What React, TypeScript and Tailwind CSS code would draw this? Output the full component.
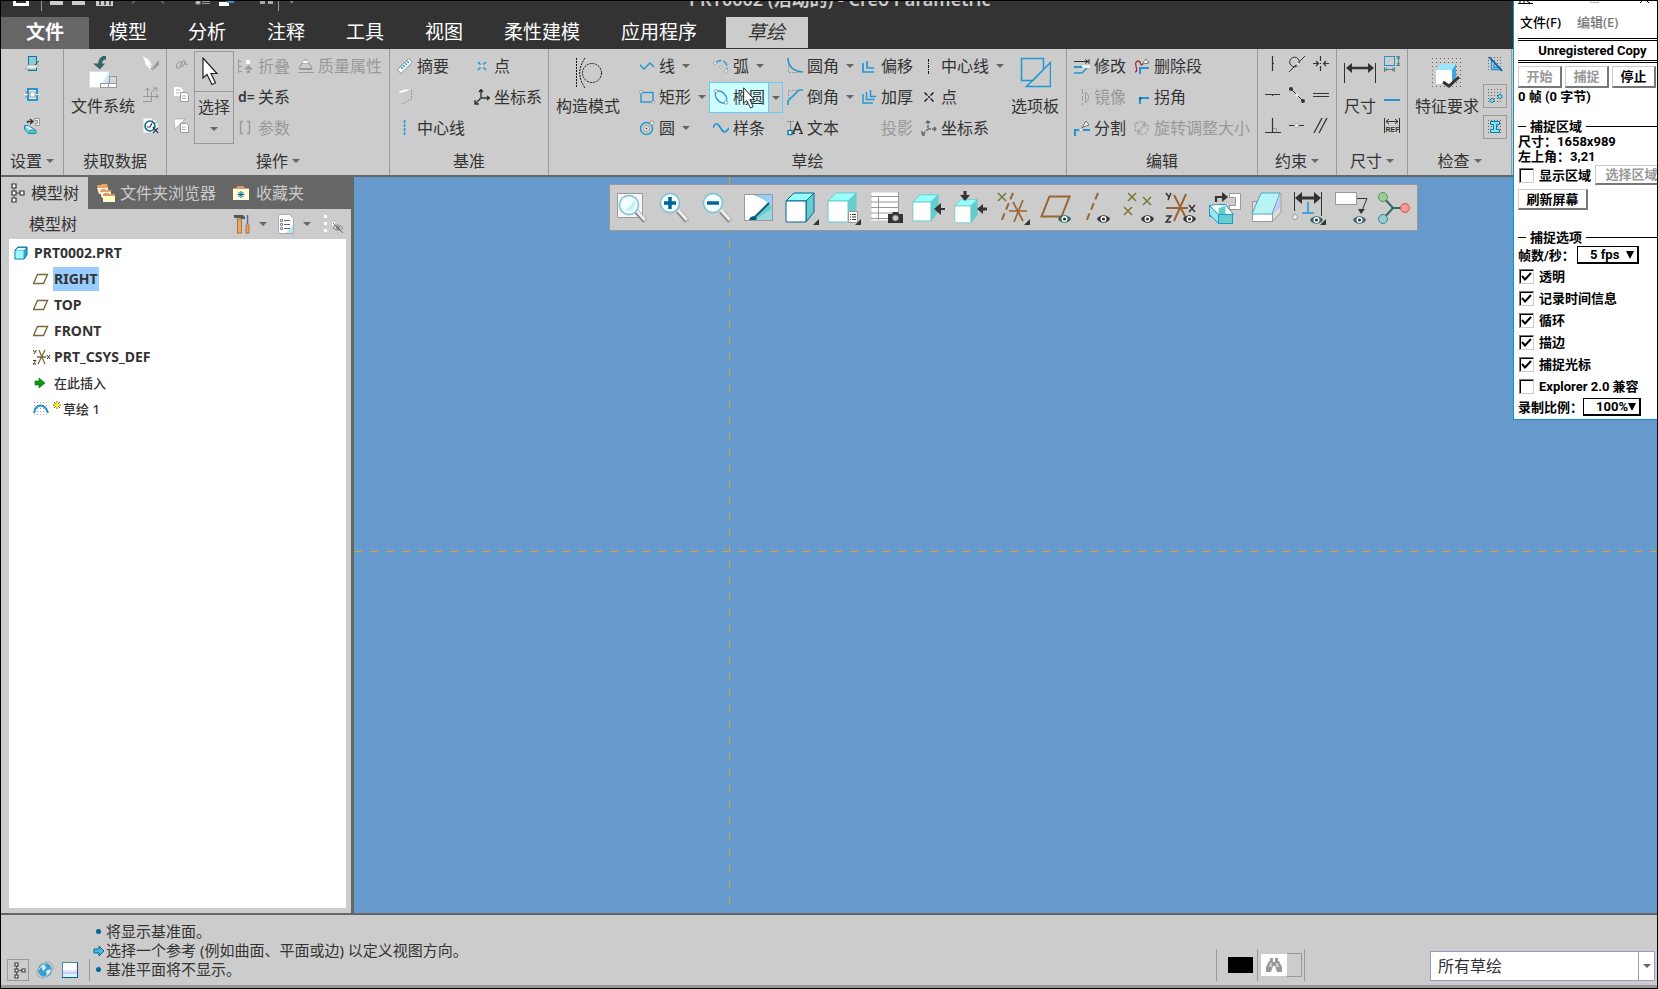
import React from 'react';

const UI = 'font-["Noto_Sans","Noto_Sans_CJK_SC",sans-serif]';
const B = '#2196d3';
const D = '#333333';
const G = '#999999';

type IconProps = { w?: number; h?: number; children?: React.ReactNode };
const Icon = ({ w = 16, h = 16, children }: IconProps) => (
  <svg width={w} height={h} viewBox={`0 0 ${w} ${h}`} fill="none" className="shrink-0" aria-hidden="true">
    {children}
  </svg>
);

const Caret = ({ color = '#666666' }: { color?: string }) => (
  <svg width="8" height="4" viewBox="0 0 8 4" className="shrink-0" aria-hidden="true">
    <path d="M0 0h8L4 4z" fill={color} />
  </svg>
);

const Empty = () => <Icon />;

/* ---------- ribbon icons ---------- */
const ViewSetup = () => (
  <Icon>
    <rect x="4.500" y=".5" width="8" height="14" fill="#8fccd0" stroke="#0a7aa5" />
    <path d="M4 9h11l-4 4H1z" fill="#eee" stroke={G} strokeWidth=".7" />
    <path d="M11 9l4-4" stroke={D} strokeWidth=".8" />
  </Icon>
);
const SectionSetup = () => (
  <Icon>
    <rect x="4" y="2" width="9" height="11" fill="#eee" stroke={B} strokeWidth="2" />
    <rect x="6" y="5" width="5" height="5" fill="#fff" stroke="#888" strokeWidth=".8" />
    <path d="M0 7.500h4M12 7.500h4" stroke="#fff" strokeDasharray="2 1" />
    <path d="M1 4l2 2M1 11l2-2" stroke="#777" strokeWidth=".8" />
  </Icon>
);
const RegenSetup = () => (
  <Icon>
    <path d="M3.500 5V3.500H8M6 1l3 2.500L6 6" stroke={D} strokeWidth="1.300" />
    <path d="M10.500.500h5v7h-4v-2h2v-3h-3z" fill="#eee" stroke={G} />
    <path d="M.5 7.500h4l6 4v4h-6l-4-4z" fill="#d8f8fb" stroke="#1683b0" />
    <path d="M1 8l4 4v3.500L1 11.500z" fill="#66c6d6" />
    <path d="M6 12h6v3.500H5z" fill="#59bfc8" stroke="#1683b0" strokeWidth=".7" />
  </Icon>
);
const FileSystem = () => (
  <Icon w={28} h={34}>
    <path d="M17 1.500c-4 0-6 3-6 7" stroke="#336666" strokeWidth="4" />
    <path d="M4 7.500l7 6 5-6z" fill="#336666" />
    <rect x=".5" y="15.500" width="19" height="16" fill="#fff" stroke="#ddd" />
    <path d="M13 28l7-13v13z" fill="#c4eef5" />
    <path d="M18 28l2-8v8z" fill="#ccccff" />
    <rect x="20.500" y="20.500" width="7" height="8" fill="#d4d4dc" stroke={G} />
    <rect x="11.500" y="27.500" width="16" height="4" fill="#fff" stroke={G} />
    <path d="M19.500 28v4" stroke={G} />
  </Icon>
);
const Shrinkwrap = () => (
  <Icon>
    <path d="M0 0l6 4 4 8-2 2-5-5z" fill="#fff" />
    <path d="M7 13l4-3 5-6v5l-6 5z" fill={G} />
    <path d="M7 9l3 4" stroke="#bbb" />
  </Icon>
);
const Transfer = () => (
  <Icon>
    <path d="M0 9.500h15M4.500 1v8M2 3.500L4.500 1 7 3.500M8.500 9V5l5-4M10 1h4v4M12.500 7l3 2.500-3 2.500M8.500 10v4.500H0" stroke={G} />
  </Icon>
);
const Inspect = () => (
  <Icon>
    <path d="M.5.500h9l5 4v10H.5z" fill="#fff" />
    <path d="M9.500.500v4h5" stroke={G} strokeWidth=".7" />
    <circle cx="7" cy="8" r="5" stroke="#0b6a8e" strokeWidth="1.600" />
    <path d="M4 9h3l2-4M10 9l5 6M15 10l-5 5" stroke="#236" strokeWidth="1.200" />
  </Icon>
);
const Link = () => (
  <Icon>
    <ellipse cx="5" cy="9" rx="2" ry="3.500" stroke={G} transform="rotate(30 5 9)" />
    <ellipse cx="9" cy="7.500" rx="1.500" ry="3" stroke={G} transform="rotate(30 9 7.500)" />
    <path d="M10 6.500h2v2h2" stroke={G} />
  </Icon>
);
const Copy = () => (
  <Icon>
    <path d="M0 0h6l3 3v6H0z" fill="#fff" />
    <path d="M6.500 5.500h6l2 2v7h-8z" fill="#fff" stroke={G} />
    <path d="M2 3h4M2 6h3M8 9h4M8 11.500h4" stroke={G} strokeWidth=".8" />
  </Icon>
);
const Paste = () => (
  <Icon>
    <path d="M0 1h11L1 11z" fill="#fff" stroke={G} strokeWidth=".6" />
    <path d="M6.500 5.500h6l2 2v7h-8z" fill="#fff" stroke={G} />
    <path d="M8 9h4M8 11.500h4" stroke={G} strokeWidth=".8" />
  </Icon>
);
const Pointer = ({ w = 18, h = 30 }: { w?: number; h?: number }) => (
  <svg width={w} height={h} viewBox="0 0 18 30" aria-hidden="true" className="shrink-0">
    <path d="M2 1v20l4-3.500 5 10 3.500-1.800L10 16.500h6z" fill="#fff" stroke="#222" strokeWidth="1.200" />
  </svg>
);
const Collapse = () => (
  <Icon>
    <path d="M.5 1v14M1 3.500h3M1 8.500h3M1 13.500h3" stroke={G} />
    <rect x="8" y="2" width="4" height="4" fill="#fff" />
    <path d="M6 11.500h9L10.500 7zM9 12.500h3v2.500h-3z" fill={G} />
  </Icon>
);
const Mass = () => (
  <Icon>
    <path d="M5 5c0-5 5-5 5 0M4 5h7l3 5.500H1z" stroke={G} />
    <path d="M5 4h5" stroke="#fff" strokeWidth="2" />
    <path d="M2 11.500h12M0 14.500h16" stroke={G} />
  </Icon>
);
const Params = () => (
  <Icon>
    <path d="M5 1.500H2.500v12H5M9 1.500h2.500v12H9" stroke={G} strokeWidth="1.400" />
  </Icon>
);
const Ruler = () => (
  <Icon>
    <path d="M.5 11.500L11.500.500l4 3.500L4 15.500z" fill="#fff" stroke="#777" strokeWidth=".8" />
    <path d="M4 9l2 2M6 7l2 2M8 5l2 2M10 3l2 2" stroke={B} strokeWidth="1.300" />
  </Icon>
);
const PointBlue = () => (
  <Icon>
    <path d="M4 4l2.500 2.500M12 4L9.500 6.500M4 12l2.500-2.500M12 12L9.500 9.500" stroke={B} strokeWidth="1.500" />
    <circle cx="8" cy="8" r="1.500" fill="#eee" stroke={G} strokeWidth=".5" />
  </Icon>
);
const PlaneGrey = () => (
  <Icon>
    <path d="M14.500 1v9L5 15" stroke={G} strokeDasharray="2 1" />
    <path d="M2 2l6-2h6l-3 2-9 3z" fill="#fff" stroke="#bbb" strokeWidth=".6" />
  </Icon>
);
const Csys = ({ color = D, light = false }: { color?: string; light?: boolean }) => (
  <Icon>
    <path d="M7 1v8h8M7 9l-6 6M5 3l2-2.500L9 3M13 7l2.500 2L13 11M1 11v4h4" stroke={color} strokeWidth="1.400" strokeDasharray={light ? '3 1' : undefined} />
  </Icon>
);
const CenterBlue = () => (
  <Icon>
    <path d="M7.500 0v16" stroke={B} strokeWidth="1.600" strokeDasharray="3 1" />
  </Icon>
);
const Construction = () => (
  <Icon w={28} h={30}>
    <path d="M2.500 0v30M11 0C4 10 4 20 11 30" stroke="#111" strokeDasharray="2 1" />
    <circle cx="18" cy="15" r="9.500" stroke="#111" strokeDasharray="2 1" />
  </Icon>
);
const Line = () => (
  <Icon>
    <path d="M1 7l4 4 6-6 4 4" stroke={B} strokeWidth="1.500" />
  </Icon>
);
const Rect = () => (
  <Icon>
    <rect x="2" y="3.500" width="12" height="9.500" stroke={B} strokeWidth="1.400" />
    <circle cx="2" cy="3" r="1.500" fill="#eee" stroke="#777" strokeWidth=".5" />
    <circle cx="14" cy="13.500" r="1.500" fill="#eee" stroke="#777" strokeWidth=".5" />
  </Icon>
);
const Circle = () => (
  <Icon>
    <circle cx="7.500" cy="8.500" r="6" stroke={B} strokeWidth="1.500" />
    <circle cx="7.500" cy="8.500" r="3" fill="#eee" stroke={G} />
    <circle cx="7.500" cy="8.500" r="1" fill="#555" />
    <circle cx="13" cy="3" r="2" fill="#eee" stroke={G} />
  </Icon>
);
const Arc = () => (
  <Icon>
    <path d="M3 5c3-4 10-3 11 3v3" stroke={B} strokeWidth="1.500" strokeDasharray="6 2" />
    <circle cx="2" cy="5" r="1.500" fill="#eee" stroke={G} strokeWidth=".6" />
    <circle cx="13" cy="13" r="1.500" fill="#eee" stroke={G} strokeWidth=".6" />
    <circle cx="8" cy="9" r="1.300" fill="#eee" stroke={G} strokeWidth=".6" />
  </Icon>
);
const Ellipse = () => (
  <Icon>
    <ellipse cx="8" cy="8" rx="7" ry="4.500" stroke={B} strokeWidth="1.300" transform="rotate(48 8 8)" />
    <circle cx="3" cy="2" r="1.800" fill="#eee" stroke={G} strokeWidth=".8" />
    <circle cx="13" cy="13.500" r="1.800" fill="#eee" stroke={G} strokeWidth=".8" />
  </Icon>
);
const Spline = () => (
  <Icon>
    <path d="M0 8c2-6 5-5 7-1s5 8 9 1" stroke={B} strokeWidth="1.700" />
  </Icon>
);
const Fillet = () => (
  <Icon>
    <path d="M1 0c0 7 4 13 15 14" stroke={B} strokeWidth="1.600" />
    <path d="M1.500 6v8.500H12" stroke={G} strokeDasharray="2 1" />
  </Icon>
);
const Chamfer = () => (
  <Icon>
    <path d="M1 16v-4L12 1h4" stroke={B} strokeWidth="1.600" />
    <path d="M1.500 10V1.500H11" stroke={G} strokeDasharray="2 1" />
  </Icon>
);
const TextIcon = () => (
  <Icon>
    <path d="M0 1.500h7M3.500 2v9" stroke="#888" />
    <path d="M6 13.500l4.500-11 4.500 11M8 9.500h5" stroke={D} strokeWidth="1.600" />
    <path d="M5 13.500h3M12 13.500h4" stroke={D} />
    <rect x="1" y="10.500" width="4" height="4" fill="#fff" stroke="#0a7aa5" strokeWidth="1.400" />
  </Icon>
);
const Offset = () => (
  <Icon>
    <path d="M2 5v9h11M6 3v7h7" stroke={B} strokeWidth="1.700" />
  </Icon>
);
const Thicken = () => (
  <Icon>
    <path d="M2 5v9h10M5.500 3v7.500h8M9.500 1v6.500H15" stroke={B} strokeWidth="1.500" />
  </Icon>
);
const CenterBlack = () => (
  <Icon>
    <path d="M7.500 1v15" stroke="#111" strokeDasharray="3 1 1 1" />
  </Icon>
);
const PointBlack = () => (
  <Icon>
    <path d="M3.500 3.500l3 3M12.500 3.500l-3 3M3.500 12.500l3-3M12.500 12.500l-3-3" stroke="#111" strokeWidth="1.300" />
    <circle cx="8" cy="8" r="1" fill="#111" />
  </Icon>
);
const Palette = () => (
  <Icon w={32} h={32}>
    <path d="M2.500 1.500h22v11L14 23.500H2.500zM31.500 5.500v24h-24z" stroke={B} strokeWidth="1.500" />
  </Icon>
);
const Modify = () => (
  <Icon>
    <path d="M0 3.500h15M15 1v5M11 1.500l3 2-3 2" stroke={D} />
    <path d="M0 9h9" stroke={B} strokeWidth="2" />
    <path d="M0 15h8l5-5" stroke={B} strokeWidth="1.500" />
    <path d="M8 8.500h8" stroke="#fff" strokeWidth="2" />
  </Icon>
);
const Mirror = () => (
  <Icon>
    <path d="M8.500 0v16" stroke={G} strokeDasharray="5 2" />
    <path d="M11.500 3.500c4 2 4 8 0 10z" stroke={G} />
  </Icon>
);
const Divide = () => (
  <Icon>
    <path d="M1 16v-6h4M9 10h7" stroke={B} strokeWidth="2" />
    <circle cx="7" cy="10" r="1.800" fill="#eee" stroke={G} strokeWidth=".6" />
    <path d="M8 8l4-7 3 4-6 2z" fill="#fff" stroke="#555" strokeWidth=".8" />
  </Icon>
);
const DeleteSeg = () => (
  <Icon>
    <path d="M1 14c5-1-3-10 3-11 4 0 1 6 5 3" stroke="#aa2b35" strokeWidth="1.300" />
    <path d="M6 16v-6h9" stroke={B} strokeWidth="2" />
    <path d="M8 6l4-5 3 4z" fill="#fff" stroke="#555" strokeWidth=".8" />
  </Icon>
);
const Corner = () => (
  <Icon>
    <path d="M6 15V9h9" stroke={B} strokeWidth="2" />
    <rect x="5" y="8" width="2.500" height="2.500" fill="#0a6d9c" />
  </Icon>
);
const Rotate = () => (
  <Icon>
    <circle cx="7.500" cy="8" r="6.500" stroke={G} strokeDasharray="3 1" />
    <path d="M4 12l7-8M8 4h3v3M4 9v3h3M0 4l3-2" stroke={G} />
  </Icon>
);
const CVert = () => (<Icon><path d="M7.500 0v15M7 7.500h2" stroke={D} strokeWidth="1.200" /></Icon>);
const CTan = () => (
  <Icon>
    <circle cx="5.500" cy="6" r="4.800" stroke={D} />
    <path d="M0 16L16 0" stroke={D} />
    <circle cx="9" cy="8" r="1.600" fill="#eee" />
  </Icon>
);
const CSym = () => (<Icon><path d="M7.500 0v5M7.500 10v5M0 7.500h5M16 7.500h-5M3 5l2.500 2.500L3 10M13 5l-2.500 2.500L13 10M7.500 7v1" stroke={D} strokeWidth="1.200" /></Icon>);
const CHor = () => (<Icon><path d="M0 7.500h15M7.500 7v2" stroke={D} strokeWidth="1.200" /></Icon>);
const CMid = () => (
  <Icon>
    <path d="M2 2l12 12" stroke={D} />
    <circle cx="2" cy="2" r="2" fill={D} />
    <circle cx="14" cy="14" r="2" fill={D} />
    <circle cx="8" cy="8" r="1.800" fill="#eee" />
  </Icon>
);
const CEq = () => (<Icon><path d="M0 6.500h16M0 9.500h16" stroke={D} strokeWidth="1.100" /></Icon>);
const CPerp = () => (
  <Icon>
    <path d="M7.500 0v15M0 14.500h16" stroke={D} strokeWidth="1.200" />
    <path d="M8 10.500h3.500V14" stroke={G} />
  </Icon>
);
const CCoin = () => (
  <Icon>
    <path d="M0 7.500h6M10 7.500h5" stroke={D} strokeWidth="1.200" />
    <circle cx="7.500" cy="7.500" r="2" fill="#eee" stroke={G} strokeWidth=".6" />
  </Icon>
);
const CPar = () => (<Icon><path d="M1 15L9 0M6 15l8-15" stroke={D} strokeWidth="1.300" /></Icon>);
const DimBig = () => (
  <Icon w={32} h={22}>
    <path d="M.5 1v20M31.500 1v20" stroke={D} />
    <path d="M6 6h20" stroke={D} strokeWidth="2.500" />
    <path d="M2 6l6-5v10zM30 6l-6-5v10z" fill={D} />
  </Icon>
);
const DimPerim = () => (
  <Icon>
    <rect x=".5" y=".5" width="10" height="9" stroke={B} />
    <path d="M12 .500h4M12 9.500h4M14.500 1v8M13 3l1.500-2L16 3M13 7l1.500 2L16 7M.5 11v5M10.500 11v5M1 13.500h9M3 12l-2 1.500L3 15M8 12l2 1.500L8 15" stroke="#4a7f7f" strokeWidth=".9" />
  </Icon>
);
const DimBase = () => (<Icon><path d="M0 9h16" stroke={B} strokeWidth="2" /></Icon>);
const DimRef = () => (
  <Icon>
    <path d="M.5 0v15M15.500 0v15M2 3.500h12M5 1L2 3.500 5 6M11 1l3 2.500L11 6" stroke={D} />
    <text x="1.500" y="14" fontSize="7" fontWeight="700" fill={D} fontFamily="Liberation Sans, sans-serif">REF</text>
  </Icon>
);
const Dots = ({ n, step, o = 0 }: { n: number; step: number; o?: number }) => (
  <>
    {Array.from({ length: n }, (_, i) => (
      <path key={i} d={`M${o} ${o + i * step + 0.5}h${(n - 1) * step + 1}`} stroke="#666" strokeDasharray={`1 ${step - 1}`} />
    ))}
  </>
);
const Feature = () => (
  <Icon w={30} h={30}>
    <Dots n={8} step={4} />
    <path d="M4 12l5-6h15l-4 6z" fill="#9be6fa" />
    <path d="M20 12l4-6v13l-4 7z" fill="#3ea6dc" />
    <rect x="4" y="12" width="16" height="14" fill="#fff" />
    <path d="M11 24l6 4 10-9" stroke={D} strokeWidth="3" />
  </Icon>
);
const Overlap = () => (
  <Icon>
    <Dots n={5} step={3} o={1} />
    <path d="M4.500 3v10.500h10zM7 8v3.500h4" stroke={B} strokeWidth="1.300" />
    <path d="M2 1l13 14" stroke="#075f96" strokeWidth="1.500" />
  </Icon>
);
const OpenEnds = () => (
  <Icon>
    <Dots n={5} step={3} o={1} />
    <circle cx="5" cy="12.500" r="2" fill="#8fe0ee" stroke="#0a7aa5" />
    <circle cx="13" cy="8.500" r="2" fill="#8fe0ee" stroke="#0a7aa5" />
  </Icon>
);
const Shade = () => (
  <Icon>
    <Dots n={5} step={3} o={1} />
    <path d="M3.500 2.500h9v3h-3v5h3v3h-9v-3h3v-5h-3z" fill="#7fe8f5" stroke="#0a7aa5" />
  </Icon>
);

/* ---------- panel icons ---------- */
const TreeIcon = () => (
  <Icon w={14} h={20}>
    <path d="M3 5v10M5 10h4" stroke="#555" />
    <path d="M1 1h4v4H1zM1 8h4v4H1zM1 15h4v4H1zM9 8h4v4H9z" fill="#fff" stroke={D} strokeWidth="1.200" />
  </Icon>
);
const TreeIconSmall = () => (
  <Icon w={12} h={17}>
    <path d="M2.500 4v9M5 8.500h3" stroke="#555" />
    <path d="M1 1h3v3H1zM1 7h3v3H1zM1 13h3v3H1zM8 7h3v3H8z" fill="#fff" stroke={D} strokeWidth="1.100" />
  </Icon>
);
const Folders = () => (
  <Icon w={20} h={20}>
    <path d="M1 2h4l1-1h5l1 3v7H3z" fill="#e8a46a" />
    <path d="M1 5h11v6H3z" fill="#fff0dc" />
    <path d="M4 8l2-2h3l1 1h5v8H6z" fill="#e8a46a" />
    <path d="M4 9h11v6H6z" fill="#fff0dc" />
    <path d="M7 12l1-2h4l1 1h6v8H7z" fill="#d89a60" />
    <path d="M7 13h12v6H7z" fill="#ffffc8" />
  </Icon>
);
const Favorites = () => (
  <Icon w={18} h={18}>
    <path d="M1 4h3l2-2h5l2 2h4v12H1z" fill="#d8a070" />
    <rect x="1" y="5" width="16" height="11" fill="#ffffd8" />
    <path d="M9 7v7M5.500 10.500h7M6.500 8l5 5M11.500 8l-5 5" stroke="#006699" />
  </Icon>
);
const Tools = () => (
  <Icon w={18} h={20}>
    <path d="M1 1h9l2 2v2H8V4H1z" fill="#555" />
    <rect x="4.500" y="5" width="4" height="14" fill="#e8a868" stroke="#8f5a20" strokeWidth=".7" />
    <path d="M14.500 1v9" stroke="#5a6a9a" strokeWidth="1.500" />
    <rect x="13" y="11" width="3" height="8" fill="#f0a060" stroke="#8f5a20" strokeWidth=".7" />
  </Icon>
);
const ListDoc = () => (
  <Icon w={18} h={20}>
    <path d="M1.500.500h11l4 4v15h-15z" fill="#fff" stroke="#aab" />
    <path d="M9 19l7-8v8z" fill="#b8e6f2" />
    <path d="M7 6.500h6M7 10.500h6M7 14.500h6" stroke="#667" />
    <path d="M3.500 5.500h2v2h-2zM3.500 9.500h2v2h-2zM3.500 13.500h2v2h-2z" stroke="#667" strokeWidth=".8" />
  </Icon>
);
const HideTree = () => (
  <Icon w={22} h={20}>
    <path d="M1 1h3v3H1zM1 8h3v3H1zM1 15h3v3H1zM9 8h3v3H9z" fill="#fff" />
    <path d="M10 14c3-4 7-4 10 0-3 3-7 3-10 0z" stroke="#888" />
    <circle cx="15" cy="14" r="2" fill="#888" />
    <path d="M10 9l10 10" stroke="#666" />
  </Icon>
);
const PartIcon = () => (
  <Icon w={14} h={14}>
    <path d="M1 4l3-3h9v8l-3 4H1z" fill="#2fa7d2" stroke="#0a6a9a" />
    <path d="M1.500 4.500h8v8h-8z" fill="#9ffaff" />
    <path d="M2 4l2-2h8l-2 2z" fill="#dff" />
  </Icon>
);
const DatumPlane = () => (
  <Icon w={16} h={12}>
    <path d="M4.500 1.500h10l-4 9h-10z" stroke="#7a6a3a" strokeWidth="1.400" />
  </Icon>
);
const CsysSmall = () => (
  <Icon w={18} h={16}>
    <path d="M4 8h9M6 1l6 14M12 1L5 15" stroke="#7a6a3a" strokeWidth="1.300" />
    <path d="M0 1l1.500 2M3.500 1L1 5M0 11.500h3L0 15h3M14 6l3 4M17 6l-3 4" stroke={D} />
  </Icon>
);
const InsertHere = () => (
  <Icon w={14} h={12}>
    <path d="M2 4h4V1l6 5-6 5V8H2z" fill="#0a9a0a" stroke="#066006" strokeWidth=".6" />
  </Icon>
);
const SketchIcon = () => (
  <Icon>
    <g opacity=".55"><Dots n={5} step={3} o={1} /></g>
    <path d="M1 12c2-10 11-10 14 0" stroke={B} strokeWidth="2" />
  </Icon>
);

/* ---------- graphics toolbar icons ---------- */
const Eye = ({ x, y, c = '#336666' }: { x: number; y: number; c?: string }) => (
  <g transform={`translate(${x} ${y})`}>
    <path d="M0 4c3-5 10-5 13 0-3 5-10 5-13 0z" fill={c} />
    <circle cx="6.500" cy="4" r="3" fill="#fff" />
    <circle cx="6.500" cy="4" r="1.600" fill={D} />
  </g>
);
const Tri = () => <path d="M34 28v6h-6z" fill={D} />;
const Lens = ({ mark, page = false }: { mark?: string; page?: boolean }) => (
  <Icon w={34} h={34}>
    {page && <path d="M1.500 2.500h25v24h-25z" fill="#f6f6f6" stroke={G} />}
    <path d="M20 20l9 10" stroke="#888" strokeWidth="5" />
    <path d="M20 19l9 10" stroke="#eee" strokeWidth="3" />
    <circle cx={page ? 13 : 12} cy={page ? 14 : 12} r="9.500" fill="#f2fdff" stroke="#7cc0d4" strokeWidth="1.500" />
    {mark && <path d={mark} stroke="#006699" strokeWidth="3.500" />}
    {page && <path d="M9 20l10-11c2 5-2 13-10 11z" fill="#c5f1f5" />}
  </Icon>
);
const Cube = ({ line = '#66cccc', s = 1 }: { line?: string; s?: number }) => (
  <g transform={`scale(${s})`} stroke={line} strokeLinejoin="round">
    <path d="M1 10l8-8h20l-8 8z" fill="#99ffff" />
    <path d="M21 10l8-8v19l-8 10z" fill="#66cccc" />
    <path d="M1 10h20v21H1z" fill="#fff" />
  </g>
);
const toolbarIcons: { name: string; node: React.ReactNode }[] = [
  { name: '重新调整', node: <Lens page /> },
  { name: '放大', node: <Lens mark="M6 12h12M12 6v12" /> },
  { name: '缩小', node: <Lens mark="M6 12h12" /> },
  {
    name: '重画',
    node: (
      <Icon w={34} h={34}>
        <path d="M1.500 3.500h28v26h-28z" fill="#99d8dc" stroke={G} />
        <path d="M2 4h12c9 4 13 9 15 14L11 29H2z" fill="#66cccc" />
        <path d="M2 4h8c8 2 13 6 16 9L11 29H2z" fill="#fff" />
        <path d="M14 4h15v12c-4-6-9-10-15-12z" fill="#9cf" />
        <path d="M26 12L11 27" stroke="#0b587a" strokeWidth="2" />
        <path d="M6 29c1-4 5-5 8-2l-1 2z" fill="#0b587a" />
      </Icon>
    ),
  },
  { name: '显示样式', node: <Icon w={34} h={34}><Cube line="#006699" /><Tri /></Icon> },
  {
    name: '已保存方向',
    node: (
      <Icon w={34} h={34}>
        <Cube />
        <path d="M21.500 20.500h9v11h-9z" fill="#fff" stroke={G} />
        <path d="M23 23.500h1M25 23.500h4M23 26h1M25 26h4M23 28.500h1M25 28.500h4" stroke={D} />
        <Tri />
      </Icon>
    ),
  },
  {
    name: '视图管理器',
    node: (
      <Icon w={34} h={34}>
        <path d="M1.500 1.500h27v28h-27z" fill="#fff" />
        <path d="M1 5.500h27M1 11h27M1 16.500h27M1 22h27M1 27.500h27M8.500 5v24M28.500 1v28" stroke={G} />
        <path d="M18 23h4l1-2h5l1 2h4v9H18z" fill={D} />
        <circle cx="25.500" cy="27" r="3" fill="#ccc" stroke="#777" />
      </Icon>
    ),
  },
  { name: '视图法向', node: <Icon w={34} h={34}><g transform="translate(0 2)"><Cube s={0.9} /></g><path d="M33 18H27" stroke={D} strokeWidth="2" /><path d="M22 18l7-6v12z" fill={D} /></Icon> },
  {
    name: '标准方向',
    node: (
      <Icon w={34} h={34}>
        <g transform="translate(0 7)"><Cube s={0.8} /></g>
        <path d="M11 0v5M33 18h-5" stroke={D} strokeWidth="3" />
        <path d="M6 4h10l-5 6zM29 13v10l-6-5z" fill={D} />
      </Icon>
    ),
  },
  {
    name: '基准显示过滤器',
    node: (
      <Icon w={34} h={34}>
        <path d="M2 2l8 8M10 2l-8 8" stroke="#777733" strokeWidth="1.500" />
        <path d="M17 2L5 31" stroke="#996633" strokeWidth="2" strokeDasharray="7 4" />
        <path d="M13 20h18M17 11l10 19M27 9l-9 22" stroke="#996633" strokeWidth="1.700" />
        <Tri />
      </Icon>
    ),
  },
  { name: '平面显示', node: <Icon w={34} h={34}><path d="M10.500 5.500h20l-8 20h-20z" stroke="#996633" strokeWidth="2" /><Eye x={19} y={24} /></Icon> },
  { name: '轴显示', node: <Icon w={34} h={34}><path d="M17 2L5 31" stroke="#996633" strokeWidth="2" strokeDasharray="7 4" /><Eye x={16} y={24} c={D} /></Icon> },
  {
    name: '点显示',
    node: (
      <Icon w={34} h={34}>
        <path d="M5 2l8 8M13 2l-8 8M20 6l8 8M28 6l-8 8M1 16l8 8M9 16l-8 8" stroke="#777733" strokeWidth="1.500" />
        <Eye x={18} y={24} c={D} />
      </Icon>
    ),
  },
  {
    name: '坐标系显示',
    node: (
      <Icon w={34} h={34}>
        <path d="M1 17h22M9 4l13 25M21 3L9 30" stroke="#996633" strokeWidth="2" />
        <path d="M1 2l3 4M6 2L3 9M1 25h5l-5 6h5M24 14l6 7M30 14l-6 7" stroke={D} strokeWidth="1.500" />
        <Eye x={18} y={24} c={D} />
      </Icon>
    ),
  },
  {
    name: '注释显示',
    node: (
      <Icon w={34} h={34}>
        <path d="M8 11V6h9" stroke={D} strokeWidth="2.200" />
        <path d="M14 1l6 5-6 5z" fill={D} />
        <path d="M21.500 2.500h11v16h-11v-4h6v-8h-6z" fill="#fff" stroke={G} />
        <path d="M1.500 14.500l7-1h9l8 10h-15l-9 2z" fill="#fff" stroke={B} />
        <path d="M1.500 14.500l9 9v9l-9-9z" fill="#99e6ee" stroke={B} />
        <path d="M10.500 17.500l7-3v9h-7z" fill="#66cccc" />
        <path d="M10.500 23.500h14v9h-14z" fill="#66cccc" stroke={B} />
      </Icon>
    ),
  },
  {
    name: '草绘视图',
    node: (
      <Icon w={34} h={34}>
        <path d="M2.500 10.500h20v20h-20zM10 2.500h21v19l-9 9" fill="#ddd" stroke={G} />
        <path d="M3 23h19v7H3z" fill="#fff" />
        <path d="M11 2h19l-8 21H2z" fill="#b8f4f6" stroke="#4aa9b8" />
        <path d="M30 3v14l-7 6z" fill="#c8c8ff" />
      </Icon>
    ),
  },
  {
    name: '草绘器显示过滤器',
    node: (
      <Icon w={34} h={34}>
        <path d="M2.500 1v19M29.500 1v24" stroke={D} />
        <path d="M7 7h18" stroke={D} strokeWidth="3" />
        <path d="M3 7l7-6v12zM29 7l-7-6v12z" fill={D} />
        <path d="M16 11v11M10 22h12" stroke={B} strokeWidth="1.500" />
        <circle cx="3" cy="26" r="2.500" fill="#eee" stroke={G} />
        <Eye x={18} y={25} />
        <Tri />
      </Icon>
    ),
  },
  {
    name: '注解显示',
    node: (
      <Icon w={34} h={34}>
        <path d="M.5 1.500h21v12H.5z" fill="#fff" stroke={G} />
        <path d="M22 7.500h10l-5 12" stroke={D} />
        <path d="M23 18h7l-4 5z" fill={D} />
        <Eye x={18} y={25} />
      </Icon>
    ),
  },
  {
    name: '旋转中心',
    node: (
      <Icon w={34} h={34}>
        <path d="M6 6l10 11L6 28M16 17h10" stroke="#336666" strokeWidth="2" />
        <circle cx="6" cy="6" r="4.500" fill="#99cc99" stroke="#559955" />
        <circle cx="28" cy="17" r="4.500" fill="#ff9999" stroke="#cc5555" />
        <circle cx="6" cy="28" r="4.500" fill="#99cccc" stroke="#3388aa" />
      </Icon>
    ),
  },
];

/* ---------- ribbon building blocks ---------- */
type CmdProps = { icon: React.ReactNode; label: string; arrow?: boolean; disabled?: boolean };
const Cmd = ({ icon, label, arrow, disabled }: CmdProps) => (
  <button disabled={disabled} className="flex h-[31px] items-center gap-1 pb-0.5 text-base leading-5 whitespace-nowrap text-[#333] disabled:text-[#999]">
    {icon}
    <span>{label}</span>
    {arrow && <span className="ml-[3px] flex"><Caret /></span>}
  </button>
);

const Small = ({ label, boxed, children }: { label: string; boxed?: boolean; children: React.ReactNode }) => (
  <button aria-label={label} className={`flex h-[31px] w-6 items-center justify-center ${boxed ? 'pb-1' : 'pb-1.5'}`}>
    <span className={boxed ? 'flex size-6 items-center justify-center border border-[#999]' : 'flex'}>{children}</span>
  </button>
);

const Big = ({ icon, label }: { icon: React.ReactNode; label: string }) => (
  <button className="flex flex-col items-center whitespace-nowrap text-base leading-5 text-[#333]">
    <span className="flex h-11 items-center">{icon}</span>
    <span className="pt-px">{label}</span>
  </button>
);

const Group = ({ title, arrow, width, children }: { title: string; arrow?: boolean; width: string; children: React.ReactNode }) => (
  <section className={`flex shrink-0 flex-col border-r border-[#999] pt-[2px] ${width}`}>
    <div className="flex h-[93px]">{children}</div>
    <h2 className="flex h-[31px] items-center justify-center gap-1 pt-0.5 text-base leading-5 font-normal whitespace-nowrap">
      {title}
      {arrow && <Caret />}
    </h2>
  </section>
);

const tabs = ['模型', '分析', '注释', '工具', '视图', '柔性建模', '应用程序'];

const Ribbon = () => (
  <div className="flex shrink-0 overflow-hidden border-b-2 border-[#666] bg-[#ccc] text-[#333]">
    <Group title="设置" arrow width="w-[63px]">
      <div className="flex w-full flex-col items-center">
        <Small label="视图设置"><ViewSetup /></Small>
        <Small label="截面设置"><SectionSetup /></Small>
        <Small label="重新生成"><RegenSetup /></Small>
      </div>
    </Group>
    <Group title="获取数据" width="w-[103px]">
      <div className="flex w-full items-start gap-1 pl-[7px]">
        <Big icon={<FileSystem />} label="文件系统" />
        <div>
          <Small label="收缩包络"><Shrinkwrap /></Small>
          <Small label="传输"><Transfer /></Small>
          <Small label="检查文件"><Inspect /></Small>
        </div>
      </div>
    </Group>
    <Group title="操作" arrow width="w-[223px]">
      <div className="flex pl-[3px]">
        <div>
          <Small label="链接"><Link /></Small>
          <Small label="复制"><Copy /></Small>
          <Small label="粘贴"><Paste /></Small>
        </div>
        <div className="flex w-10 flex-col border border-[#999]">
          <button aria-label="选择工具" className="flex h-10 items-center justify-center border-b border-[#999] pr-2"><Pointer /></button>
          <button className="flex flex-1 flex-col items-center gap-2.5 pt-[5px] text-base leading-5">
            选择
            <Caret />
          </button>
        </div>
        <div className="pl-1">
          <div className="flex gap-2">
            <Cmd icon={<Collapse />} label="折叠" disabled />
            <Cmd icon={<Mass />} label="质量属性" disabled />
          </div>
          <Cmd icon={<span className="w-4 text-sm font-semibold">d=</span>} label="关系" />
          <Cmd icon={<Params />} label="参数" disabled />
        </div>
      </div>
    </Group>
    <Group title="基准" width="w-[159px]">
      <div className="flex-1 pl-[7px]">
        <Cmd icon={<Ruler />} label="摘要" />
        <Cmd icon={<PlaneGrey />} label="" />
        <Cmd icon={<CenterBlue />} label="中心线" />
      </div>
      <div className="pr-1.5">
        <Cmd icon={<PointBlue />} label="点" />
        <Cmd icon={<Csys />} label="坐标系" />
      </div>
    </Group>
    <Group title="草绘" width="w-[518px]">
      <div className="flex items-start pl-[7px]">
        <Big icon={<Construction />} label="构造模式" />
        <div className="ml-[19px] w-[70px]">
          <Cmd icon={<Line />} label="线" arrow />
          <Cmd icon={<Rect />} label="矩形" arrow />
          <Cmd icon={<Circle />} label="圆" arrow />
        </div>
        <div className="w-[78px]">
          <div className="pl-1"><Cmd icon={<Arc />} label="弧" arrow /></div>
          <div className="relative flex h-[31px] w-[74px] border border-[#66ccff]">
            <button className="flex items-center gap-1 border-r border-[#66ccff] bg-[#ccffff] px-[3px] pb-0.5 text-base leading-5 whitespace-nowrap">
              <Ellipse />
              椭圆
            </button>
            <button aria-label="椭圆选项" className="flex flex-1 items-center justify-center"><Caret /></button>
            <div className="absolute top-1 left-8"><Pointer w={14} h={23} /></div>
          </div>
          <div className="pl-1"><Cmd icon={<Spline />} label="样条" /></div>
        </div>
        <div className="w-[74px]">
          <Cmd icon={<Fillet />} label="圆角" arrow />
          <Cmd icon={<Chamfer />} label="倒角" arrow />
          <Cmd icon={<TextIcon />} label="文本" />
        </div>
        <div className="w-[60px]">
          <Cmd icon={<Offset />} label="偏移" />
          <Cmd icon={<Thicken />} label="加厚" />
          <Cmd icon={<Empty />} label="投影" disabled />
        </div>
        <div className="w-[90px]">
          <Cmd icon={<CenterBlack />} label="中心线" arrow />
          <Cmd icon={<PointBlack />} label="点" />
          <Cmd icon={<Csys color="#666" light />} label="坐标系" />
        </div>
        <Big icon={<Palette />} label="选项板" />
      </div>
    </Group>
    <Group title="编辑" width="w-[191px]">
      <div className="flex gap-2 pl-[7px]">
        <div>
          <Cmd icon={<Modify />} label="修改" />
          <Cmd icon={<Mirror />} label="镜像" disabled />
          <Cmd icon={<Divide />} label="分割" />
        </div>
        <div>
          <Cmd icon={<DeleteSeg />} label="删除段" />
          <Cmd icon={<Corner />} label="拐角" />
          <Cmd icon={<Rotate />} label="旋转调整大小" disabled />
        </div>
      </div>
    </Group>
    <Group title="约束" arrow width="w-[79px]">
      <div className="grid grid-cols-3 pl-[3px]">
        <Small label="竖直"><CVert /></Small>
        <Small label="相切"><CTan /></Small>
        <Small label="对称"><CSym /></Small>
        <Small label="水平"><CHor /></Small>
        <Small label="中点"><CMid /></Small>
        <Small label="相等"><CEq /></Small>
        <Small label="垂直"><CPerp /></Small>
        <Small label="重合"><CCoin /></Small>
        <Small label="平行"><CPar /></Small>
      </div>
    </Group>
    <Group title="尺寸" arrow width="w-[71px]">
      <div className="flex items-start gap-1 pl-[7px]">
        <Big icon={<DimBig />} label="尺寸" />
        <div>
          <Small label="周长"><DimPerim /></Small>
          <div className="pt-1"><Small label="基线"><DimBase /></Small></div>
          <div className="-mt-1"><Small label="参考"><DimRef /></Small></div>
        </div>
      </div>
    </Group>
    <Group title="检查" arrow width="w-[104px]">
      <div className="flex items-start gap-1 pl-[7px]">
        <Big icon={<Feature />} label="特征要求" />
        <div>
          <Small label="重叠几何"><Overlap /></Small>
          <Small label="突出显示开放端" boxed><OpenEnds /></Small>
          <Small label="着色封闭环" boxed><Shade /></Small>
        </div>
      </div>
    </Group>
  </div>
);

const Titlebar = () => (
  <div className="flex h-4 shrink-0 items-start overflow-hidden">
    <svg width="300" height="11" viewBox="0 0 300 11" className="shrink-0" aria-hidden="true">
      <path d="M12 0h16v5H12z" fill="#fff" />
      <path d="M15 0h10v2H15z" fill="#333" />
      <path d="M40.500 0v10M277.500 0v10" stroke="#999" />
      <path d="M49 0h13v4H49zM71 0h13v4H71zM95 0h17v5H95z" fill="#ccc" />
      <path d="M98 0h2v4h-2zM103 0h2v4h-2zM108 0h2v4h-2z" fill="#555" />
      <path d="M131 2l3-2M160 0l3 2M289 0h3l-1 2z" stroke="#999" />
      <path d="M195 0h4v3h-4zM201 .500h8M201 2.500h8" fill="#ccc" stroke="#999" />
      <path d="M218 1h10v4h-10z" fill="#fff" />
      <path d="M224 0h9v2h-6z" fill="#39b" />
      <path d="M259 0h5v3h-5zM267 0h5v3h-5z" fill="#aaa" />
    </svg>
    <div className="flex h-2 flex-1 items-end pl-[388px]">
      <span className="text-lg leading-5 font-semibold whitespace-nowrap text-[#ccc]">PRT0002 (活动的) - Creo Parametric</span>
    </div>
  </div>
);

const treeItems: { label: string; icon: React.ReactNode; selected?: boolean; fresh?: boolean }[] = [
  { label: 'RIGHT', icon: <DatumPlane />, selected: true },
  { label: 'TOP', icon: <DatumPlane /> },
  { label: 'FRONT', icon: <DatumPlane /> },
  { label: 'PRT_CSYS_DEF', icon: <CsysSmall /> },
  { label: '在此插入', icon: <InsertHere /> },
  { label: '草绘 1', icon: <SketchIcon />, fresh: true },
];

const Sidebar = () => (
  <aside className="flex w-[353px] shrink-0 flex-col border-r-[3px] border-[#666] bg-[#ccc] text-[#333]">
    <div className="flex h-8 bg-[#666] text-base leading-5">
      <button className="flex w-[87px] items-center gap-1.5 bg-[#ccc] pl-2.5"><TreeIcon />模型树</button>
      <button className="flex items-center gap-1 pl-2 text-[#ccc]"><Folders />文件夹浏览器</button>
      <button className="flex items-center gap-1.5 pl-4 text-[#ccc]"><Favorites />收藏夹</button>
    </div>
    <div className="flex h-[30px] items-center pr-1.5 pl-7 text-base leading-5">
      <span className="flex-1">模型树</span>
      <button aria-label="设置" className="flex items-center gap-2"><Tools /><Caret /></button>
      <button aria-label="显示" className="ml-2.5 flex items-center gap-2"><ListDoc /><Caret /></button>
      <button aria-label="隐藏" className="ml-3 flex"><HideTree /></button>
    </div>
    <div className="mr-[5px] mb-[5px] ml-2 flex-1 bg-white pt-[1px] text-sm font-bold">
      <div className="flex h-[26px] items-center gap-1.5 pl-[5px]">
        <PartIcon />
        PRT0002.PRT
      </div>
      <ul>
        {treeItems.map((t) => (
          <li key={t.label} className="flex h-[26px] items-center pl-6">
            <span className="flex w-5 items-center">{t.icon}</span>
            {t.fresh && (
              <svg width="8" height="8" viewBox="0 0 8 8" className="mr-px mb-2 shrink-0" aria-hidden="true">
                <path d="M4 0v8M0 4h8M1 1l6 6M7 1L1 7" stroke="#333" strokeWidth=".8" />
                <path d="M4 1.500v5M1.500 4h5" stroke="#ffee00" strokeWidth="2.500" />
              </svg>
            )}
            <span className={t.selected ? 'bg-[#99ccff] px-px leading-6' : /^[A-Z]/.test(t.label) ? 'px-px' : 'px-px text-[13px] font-medium'}>{t.label}</span>
          </li>
        ))}
      </ul>
    </div>
  </aside>
);

const Canvas = () => (
  <main className="relative flex-1 overflow-hidden bg-[#6699cc]">
    <svg className="absolute inset-0 size-full" aria-hidden="true">
      <line x1="375.500" y1="0" x2="375.500" y2="729" stroke="#e69f26" strokeDasharray="8 8" />
      <line x1="0" y1="374.500" x2="100%" y2="374.500" stroke="#e69f26" strokeDasharray="8 8" />
    </svg>
    <div role="toolbar" aria-label="图形工具栏" className="absolute top-[7px] left-[255px] flex h-[47px] w-[809px] items-center justify-between border border-[#999] bg-[#ccc] px-1.5">
      {toolbarIcons.map((t) => (
        <button key={t.name} aria-label={t.name} className="flex">{t.node}</button>
      ))}
    </div>
  </main>
);

const Bullet = () => (
  <span className="w-[13px] pl-[3px]"><Icon w={5} h={5}><circle cx="2.500" cy="2.500" r="2.500" fill="#006699" /></Icon></span>
);

const StatusBar = () => (
  <footer className="flex h-[75px] shrink-0 border-t-2 border-b-[3px] border-t-[#666] border-b-[#999] bg-[#ccc] text-[#333]">
    <div className="flex items-end gap-[7px] pb-1 pl-1.5">
      <button aria-label="模型树" className="flex size-[22px] items-center justify-center border border-[#999] pl-1">
        <TreeIconSmall />
      </button>
      <button aria-label="浏览器" className="mb-0.5 flex size-[18px] items-center justify-center">
        <Icon w={18} h={18}>
          <circle cx="9" cy="9" r="7" fill="#3a9fd0" />
          <path d="M5 5l4-1 1 3-3 3zM10 10l4-2v4l-3 2z" fill="#cdf1fa" />
          <ellipse cx="9" cy="9" rx="10.500" ry="5.500" stroke="#fff" strokeWidth="1" transform="rotate(-45 9 9)" />
          <ellipse cx="9" cy="9" rx="10" ry="6" stroke="#678" strokeWidth=".7" transform="rotate(-45 9 9)" />
        </Icon>
      </button>
      <button aria-label="全屏" className="mb-[3px] ml-px flex">
        <Icon>
          <rect x=".5" y=".5" width="15" height="15" fill="#fff" stroke="#4a8ab0" />
          <rect x="1" y="8" width="14" height="2" fill="#e4e4ff" />
          <rect x="1" y="10" width="14" height="2" fill="#ccccff" />
          <rect x="1" y="12" width="14" height="3" fill="#d8f6fa" />
          <path d="M15.500 0v15.500H0" stroke="#0b5a8a" />
        </Icon>
      </button>
      <span className="ml-1 h-[22px] w-px bg-[#999]" />
    </div>
    <ul className="flex-1 pt-[7px] pl-[3px] text-[15px] leading-[19px]">
      <li className="flex items-center"><Bullet />将显示基准面。</li>
      <li className="flex items-center">
        <span className="w-[13px]"><Icon w={12} h={12}><path d="M1 4h5V1l5 5-5 5V8H1z" fill="#4ab8e0" stroke="#006699" /></Icon></span>
        选择一个参考 (例如曲面、平面或边) 以定义视图方向。
      </li>
      <li className="flex items-center"><Bullet />基准平面将不显示。</li>
    </ul>
    <div className="mr-[125px] mb-1 flex h-8 items-center self-end border-x border-[#999]">
      <span className="mr-1 ml-[11px] h-4 w-[25px] bg-black" />
      <span className="h-8 w-px bg-[#999]" />
      <button aria-label="查找" className="ml-[3px] flex h-[22px] w-[26px] items-center justify-center bg-white">
        <Icon>
          <path d="M4 1h3v3H4zM9 1h3v3H9zM3 4h4v5l-2 6H0v-5zM9 4h4l3 6v5h-5L9 9zM7 5h2v4H7z" fill="#999" />
          <path d="M4 6h2v4H3zM10 6h2l1 4h-3z" fill="#ccc" />
        </Icon>
      </button>
      <span className="mr-0.5 h-6 w-[15px] border border-l-0 border-[#999]" />
    </div>
    <label className="mr-0.5 mb-1 flex h-[30px] w-[225px] items-center self-end border border-[#9999cc] bg-white">
      <select aria-label="选择过滤器" className="h-full flex-1 appearance-none pl-[7px] text-base leading-5 outline-none" defaultValue="所有草绘">
        <option>所有草绘</option>
      </select>
      <span className="flex h-full w-4 items-center justify-center border-l border-[#9999cc]"><Caret /></span>
    </label>
  </footer>
);

/* ---------- capture tool window ---------- */
const WinButton = ({ children, disabled, cls }: { children: string; disabled?: boolean; cls: string }) => (
  <button
    disabled={disabled}
    className={`shrink-0 border-t border-r-2 border-b-2 border-l border-t-[#ccc] border-r-[#777] border-b-[#777] border-l-[#ccc] bg-white text-center whitespace-nowrap disabled:text-[#999] ${cls}`}
  >
    {children}
  </button>
);
const Legend = ({ children }: { children: string }) => (
  <div className="flex h-[15px] items-center gap-1"><span className="h-px w-2 bg-black" />{children}<span className="h-px flex-1 bg-black" /></div>
);
const WinCheck = ({ label, checked }: { label: string; checked?: boolean }) => (
  <label className="flex h-[22px] items-center gap-[5px] pl-px whitespace-nowrap">
    <span className="grid size-[15px] shrink-0">
      <input type="checkbox" defaultChecked={checked} className="peer col-start-1 row-start-1 size-[15px] appearance-none border border-t-[#777] border-r-[#ccc] border-b-[#ccc] border-l-[#777] shadow-[inset_1px_1px_0_#000]" />
      <svg width="15" height="15" viewBox="0 0 15 15" className="pointer-events-none invisible col-start-1 row-start-1 peer-checked:visible" aria-hidden="true">
        <path d="M3 7l3 3.500L12 4" fill="none" stroke="#000" strokeWidth="2" />
      </svg>
    </span>
    {label}
  </label>
);
const WinSelect = ({ label, value, cls }: { label: string; value: string; cls: string }) => (
  <label className="flex h-5 items-center whitespace-nowrap">
    <span className="flex-1">{label}</span>
    <span className={`flex h-[18px] items-center border border-r-2 border-b-2 border-black pr-[3px] ${cls}`}>
      <select defaultValue={value} className="h-full min-w-0 flex-1 appearance-none pl-3 outline-none">
        <option>{value}</option>
      </select>
      <svg width="8" height="8" viewBox="0 0 8 8" aria-hidden="true"><path d="M0 0h8L4 8z" /></svg>
    </span>
  </label>
);

const CaptureWindow = () => (
  <div className='absolute top-0 right-0 w-[144px] overflow-hidden border-b border-l border-[#0099cc] bg-white pl-1 font-["Roboto","Noto_Sans_CJK_SC",sans-serif] text-[13px] leading-[15px] font-bold text-black'>
    <svg width="135" height="8" viewBox="0 0 135 8" className="block" aria-hidden="true">
      <path d="M0 2.500h15M2 0v2M6 0v2M9 0l3 2" stroke="#000" />
      <path d="M72.500 0v1.500h8V0" fill="none" stroke="#bbb" />
      <path d="M122 2l3-3M131 2l-3-3" stroke="#000" />
    </svg>
    <div className='flex h-[29px] items-center gap-4 pb-0.5 pl-0.5 font-["Noto_Sans","Noto_Sans_CJK_SC",sans-serif] text-[13px] font-medium'>
      <button>文件(F)</button>
      <button className="text-[#777]">编辑(E)</button>
    </div>
    <div className="flex h-[25px] items-center justify-center border-y-[3px] border-double border-black pl-2.5">Unregistered Copy</div>
    <div className="mt-[3px] flex gap-[3px] pr-0.5">
      <WinButton disabled cls="h-[22px] w-11">开始</WinButton>
      <WinButton disabled cls="h-[22px] w-11">捕捉</WinButton>
      <WinButton cls="h-[22px] w-11">停止</WinButton>
    </div>
    <p className="pt-px">0 帧 (0 字节)</p>
    <div className="mt-[15px]"><Legend>捕捉区域</Legend></div>
    <p>尺寸：1658x989</p>
    <p>左上角：3,21</p>
    <div className="flex items-center gap-1">
      <WinCheck label="显示区域" />
      <WinButton disabled cls="h-5 w-[74px]">选择区域</WinButton>
    </div>
    <WinButton cls="mt-[3px] h-[21px] w-[70px]">刷新屏幕</WinButton>
    <div className="mt-5"><Legend>捕捉选项</Legend></div>
    <div className="pr-[18px]"><WinSelect label="帧数/秒：" value="5 fps" cls="w-[62px]" /></div>
    <WinCheck label="透明" checked />
    <WinCheck label="记录时间信息" checked />
    <WinCheck label="循环" checked />
    <WinCheck label="描边" checked />
    <WinCheck label="捕捉光标" checked />
    <WinCheck label="Explorer 2.0 兼容" />
    <div className="pr-4 pb-0.5"><WinSelect label="录制比例：" value="100%" cls="w-[58px]" /></div>
  </div>
);

export default function App() {
  return (
    <div className={`relative flex h-screen min-h-[700px] flex-col overflow-hidden border border-black bg-[#333] ${UI}`}>
      <Titlebar />
      <nav className="flex h-8 shrink-0 items-stretch text-[19px] leading-6 whitespace-nowrap text-white">
        <button className="w-[88px] bg-[#666] pb-0.5 font-bold">文件</button>
        <div className="flex gap-px">
          {tabs.map((t) => (
            <button key={t} className="px-5 pb-0.5">{t}</button>
          ))}
        </div>
        <button className="mb-px ml-[9px] w-[82px] bg-[#ccc] pr-0.5 pb-0.5 text-[#333] italic">草绘</button>
      </nav>
      <Ribbon />
      <div className="flex min-h-0 flex-1">
        <Sidebar />
        <Canvas />
      </div>
      <StatusBar />
      <CaptureWindow />
    </div>
  );
}
